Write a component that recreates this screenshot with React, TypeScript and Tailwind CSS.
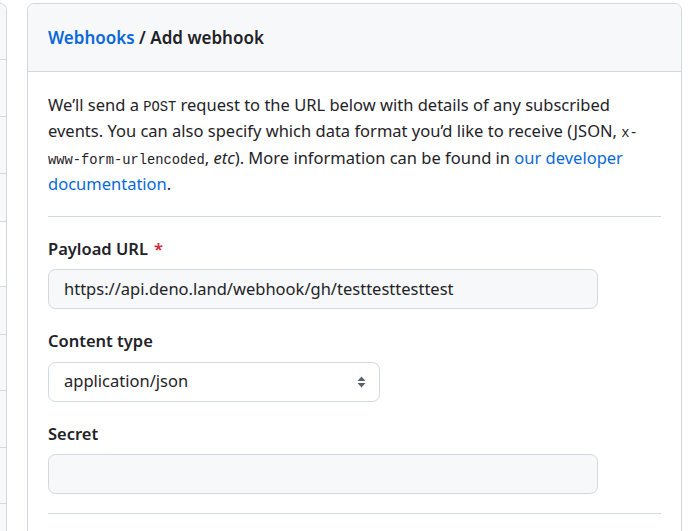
import React from "react";

const sidebarRows = [
  { h: 56, active: false },
  { h: 57, active: false },
  { h: 57, active: false },
  { h: 48, active: false },
  { h: 65, active: true },
  { h: 48, active: false },
  { h: 56, active: false },
  { h: 57, active: false },
  { h: 56, active: false },
  { h: 56, active: false },
];

const mono = "font-['Liberation_Mono',monospace] text-[13.75px] leading-none";

const SortIcon: React.FC = () => (
  <svg width="9" height="12" viewBox="0 0 9 12" className="text-[#59636e]">
    <path d="M4.5 0.5 L8.5 5 L0.5 5 Z" fill="currentColor" />
    <path d="M0.5 7 L8.5 7 L4.5 11.5 Z" fill="currentColor" />
  </svg>
);

const Label: React.FC<{ text: string; required?: boolean }> = ( { text, required } ) => (
  <div className="mb-[7px] text-[16.5px] font-semibold leading-[26.25px]">
    {text}
    {required && <span className="ml-[6px] text-[#d1242f]">*</span>}
  </div>
);

export default function App()
{
  return (
    <div className="flex h-[531px] w-[688px] overflow-hidden bg-white pt-[3px] font-['Noto_Sans',sans-serif] text-[#1f2328]">
      <aside className="w-[7px] shrink-0 overflow-hidden rounded-tr-[7px] border-r border-t border-[#d1d9e0]">
        {sidebarRows.map( ( row, idx ) => (
          <div
            key={idx}
            className={row.active ? "border-b border-[#d1d9e0] bg-white" : "border-b border-[#d1d9e0] bg-[#f6f8fa]"}
            style={{ height: row.h }}
          />
        ) )}
      </aside>

      <main className="ml-[20px] h-[560px] w-[655px] shrink-0 rounded-t-[7px] border border-[#d1d9e0]">
        <header className="flex h-[68px] items-center rounded-t-[7px] border-b border-[#d1d9e0] bg-[#f6f8fa] px-[20px]">
          <h3 className="text-[17px] font-semibold leading-[26px]">
            <a href="#" className="text-[#0969da]">Webhooks</a> / Add webhook
          </h3>
        </header>

        <div className="px-[20px] pt-[20px]">
          <p className="text-[16.5px] leading-[26.25px]">
            <span className="block whitespace-nowrap">
              We’ll send a <code className={mono}>POST</code> request to the URL below with details of any subscribed
            </span>
            <span className="block whitespace-nowrap">
              events. You can also specify which data format you’d like to receive (JSON, <code className={mono}>x-</code>
            </span>
            <span className="block whitespace-nowrap">
              <code className={mono}>www-form-urlencoded</code>, <em>etc</em>). More information can be found in <a href="#" className="text-[#0969da]">our developer</a>
            </span>
            <span className="block whitespace-nowrap">
              <a href="#" className="text-[#0969da]">documentation</a>.
            </span>
          </p>

          <div className="my-[19px] border-t border-[#d1d9e0]" />

          <Label text="Payload URL" required />
          <div className="flex h-[40px] w-[550px] items-center rounded-[7.5px] border border-[#d1d9e0] bg-[#f6f8fa] px-[15px] text-[16.5px]">
            https://api.deno.land/webhook/gh/testtesttesttest
          </div>

          <div className="mt-[19px]">
            <Label text="Content type" />
            <div className="flex h-[40px] w-[332px] items-center justify-between rounded-[7.5px] border border-[#d1d9e0] bg-white pl-[15px] pr-[13px] text-[16.5px]">
              <span>application/json</span>
              <SortIcon />
            </div>
          </div>

          <div className="mt-[19px]">
            <Label text="Secret" />
            <div className="h-[40px] w-[550px] rounded-[7.5px] border border-[#d1d9e0] bg-[#f6f8fa]" />
          </div>

          <div className="mt-[19px] border-t border-[#d1d9e0]" />
        </div>
      </main>
    </div>
  );
}
